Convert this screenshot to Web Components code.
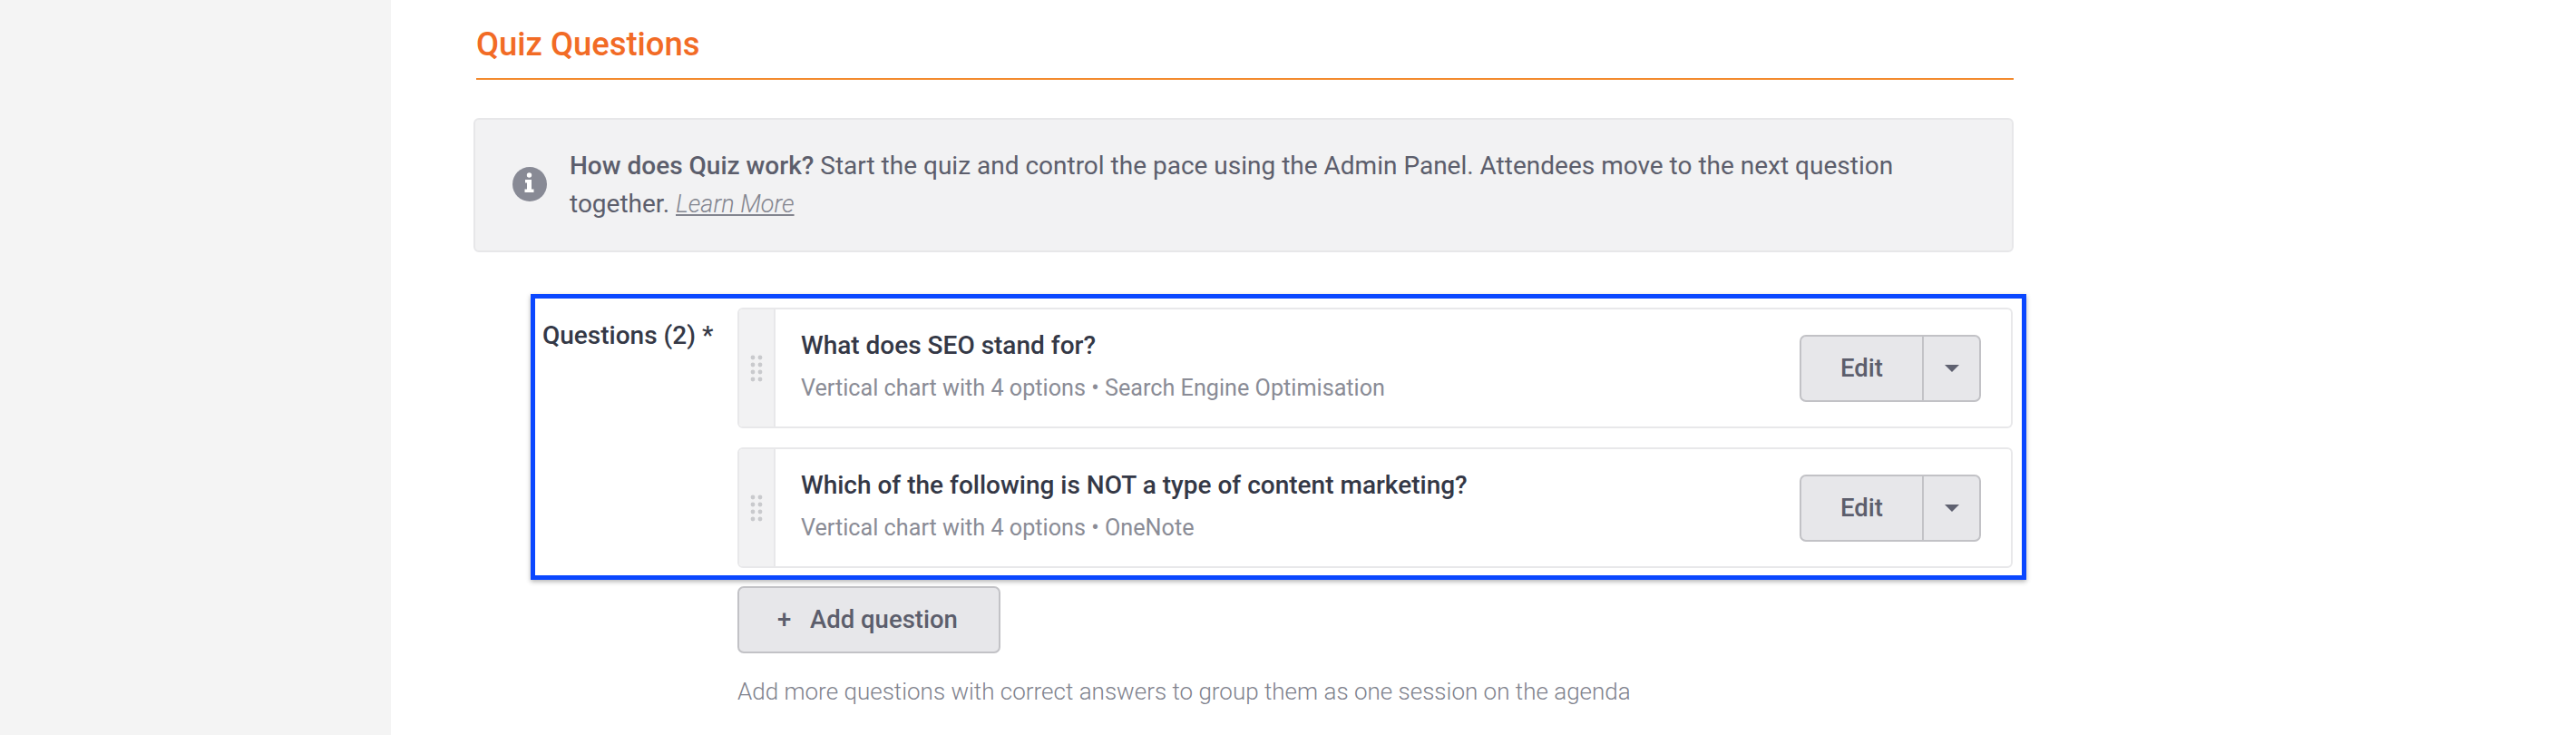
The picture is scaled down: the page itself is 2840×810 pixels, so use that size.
<!DOCTYPE html>
<html>
<head>
<meta charset="utf-8">
<title>Quiz Questions</title>
<style>
  html, body { margin: 0; height: 810px; overflow: hidden; background: #fff; font-family: Roboto, "Liberation Sans", sans-serif; }
</style>
</head>
<body>
<quiz-page>
  <section-title>Quiz Questions</section-title>
  <info-note><b>How does Quiz work?</b> Start the quiz and control the pace using the Admin Panel. Attendees move to the next question<br>together. <a>Learn More</a></info-note>
  <question-list label="Questions (2) *">
    <question-card title="What does SEO stand for?" meta="Vertical chart with 4 options • Search Engine Optimisation"></question-card>
    <question-card title="Which of the following is NOT a type of content marketing?" meta="Vertical chart with 4 options • OneNote"></question-card>
  </question-list>
  <add-question hint="Add more questions with correct answers to group them as one session on the agenda"></add-question>
</quiz-page>

<script>
class QuizPage extends HTMLElement {
  constructor() {
    super();
    this.attachShadow({ mode: 'open' });
    this.shadowRoot.innerHTML = `
      <style>
        :host { display: flex; height: 810px; overflow: hidden; }
        .side { width: 431px; flex: none; background: #f4f4f4; }
        .main { width: 1695px; margin-left: 94px; flex: none; }
      </style>
      <div class="side"></div>
      <div class="main"><slot></slot></div>
    `;
  }
}

class SectionTitle extends HTMLElement {
  constructor() {
    super();
    this.attachShadow({ mode: 'open' });
    this.shadowRoot.innerHTML = `
      <style>
        :host {
          display: block;
          height: 86px;
          border-bottom: 2px solid #f38a2e;
          color: #f26b25;
          font-size: 36.4px;
          font-weight: 500;
          line-height: 40px;
        }
        div { padding-top: 29px; }
      </style>
      <div><slot></slot></div>
    `;
  }
}

class InfoNote extends HTMLElement {
  constructor() {
    super();
    this.attachShadow({ mode: 'open' });
    this.shadowRoot.innerHTML = `
      <style>
        :host {
          display: flex;
          align-items: center;
          box-sizing: border-box;
          height: 148px;
          margin: 42px 0 0 -3px;
          padding: 0 60px 0 41px;
          gap: 25px;
          background: #f2f2f3;
          border: 2px solid #e7e7e9;
          border-radius: 6px;
          color: #5c5e6c;
          font-size: 28px;
          line-height: 42px;
        }
        svg { flex: none; width: 38px; height: 38px; margin-top: -2px; }
        ::slotted(b) { font-weight: 500; }
        ::slotted(a) { color: #83858f; font-size: 27px; font-style: italic; font-weight: 300; text-decoration: underline; }
      </style>
      <svg viewBox="0 0 38 38"><circle cx="19" cy="19" r="19" fill="#888a95"/><circle cx="18.5" cy="9" r="2.7" fill="#fff"/><path d="M14 14h7v10.5h2.5V28h-10v-3.5h2.5v-7h-2z" fill="#fff"/></svg>
      <div><slot></slot></div>
    `;
  }
}

class QuestionList extends HTMLElement {
  constructor() {
    super();
    this.attachShadow({ mode: 'open' });
    this.shadowRoot.innerHTML = `
      <style>
        :host {
          display: flex;
          box-sizing: border-box;
          width: 1649px;
          height: 315px;
          margin: 46px 0 0 60px;
          padding: 10px 10px 0 8px;
          border: 5px solid #0a47ff;
          box-shadow: 0 2px 5px rgba(0,0,0,.3);
        }
        .label {
          width: 215px;
          flex: none;
          padding-top: 11px;
          color: #343846;
          font-size: 28px;
          font-weight: 500;
          line-height: 40px;
        }
        .cards { flex: 1; display: flex; flex-direction: column; gap: 21px; }
      </style>
      <div class="label"></div>
      <div class="cards"><slot></slot></div>
    `;
    this.shadowRoot.querySelector('.label').textContent = this.getAttribute('label');
  }
}

class QuestionCard extends HTMLElement {
  constructor() {
    super();
    this.attachShadow({ mode: 'open' });
    this.shadowRoot.innerHTML = `
      <style>
        :host {
          display: flex;
          box-sizing: border-box;
          height: 133px;
          border: 2px solid #e8e8ea;
          border-radius: 6px;
          background: #fff;
          overflow: hidden;
        }
        .grip {
          width: 38px;
          flex: none;
          display: flex;
          align-items: center;
          justify-content: center;
          background: #f2f2f3;
          border-right: 2px solid #e8e8ea;
        }
        .body { flex: 1; padding: 20px 0 0 28px; }
        .title { color: #343846; font-size: 28px; font-weight: 500; line-height: 40px; }
        .meta { margin-top: 8px; color: #8a8c96; font-size: 25.2px; line-height: 38px; }
        .split {
          display: flex;
          align-self: center;
          box-sizing: border-box;
          width: 200px;
          height: 74px;
          margin: 0 33px 0 0;
          background: #e7e7ea;
          border: 2px solid #c2c2c6;
          border-radius: 7px;
          color: #5c5e6c;
        }
        .edit {
          width: 133px;
          flex: none;
          text-align: center;
          font-size: 27.5px;
          font-weight: 500;
          line-height: 70px;
          border-right: 2px solid #c2c2c6;
        }
        .caret { flex: 1; display: flex; align-items: center; justify-content: center; }
      </style>
      <div class="grip">
        <svg width="14" height="30" viewBox="0 0 14 30" fill="#c9cacd">
          <circle cx="3" cy="3" r="2.4"/><circle cx="11" cy="3" r="2.4"/>
          <circle cx="3" cy="11" r="2.4"/><circle cx="11" cy="11" r="2.4"/>
          <circle cx="3" cy="19" r="2.4"/><circle cx="11" cy="19" r="2.4"/>
          <circle cx="3" cy="27" r="2.4"/><circle cx="11" cy="27" r="2.4"/>
        </svg>
      </div>
      <div class="body">
        <div class="title"></div>
        <div class="meta"></div>
      </div>
      <div class="split">
        <div class="edit">Edit</div>
        <div class="caret"><svg width="16" height="8" viewBox="0 0 16 8"><path d="M0 0h16L8 8z" fill="#5f6170"/></svg></div>
      </div>
    `;
    this.shadowRoot.querySelector('.title').textContent = this.getAttribute('title');
    this.shadowRoot.querySelector('.meta').textContent = this.getAttribute('meta');
  }
}

class AddQuestion extends HTMLElement {
  constructor() {
    super();
    this.attachShadow({ mode: 'open' });
    this.shadowRoot.innerHTML = `
      <style>
        :host { display: block; margin: 7px 0 0 288px; }
        .btn {
          display: flex;
          align-items: center;
          box-sizing: border-box;
          width: 290px;
          height: 74px;
          padding: 0 0 2px 42px;
          background: #e7e7ea;
          border: 2px solid #c2c2c6;
          border-radius: 7px;
          color: #5c5e6c;
          font-size: 27.5px;
          font-weight: 500;
        }
        .plus { width: 36px; }
        .hint { margin-top: 23px; color: #80828d; font-size: 26px; font-weight: 300; line-height: 38px; }
      </style>
      <div class="btn"><span class="plus">+</span><span>Add question</span></div>
      <div class="hint"></div>
    `;
    this.shadowRoot.querySelector('.hint').textContent = this.getAttribute('hint');
  }
}

customElements.define('quiz-page', QuizPage);
customElements.define('section-title', SectionTitle);
customElements.define('info-note', InfoNote);
customElements.define('question-list', QuestionList);
customElements.define('question-card', QuestionCard);
customElements.define('add-question', AddQuestion);
</script>
</body>
</html>
